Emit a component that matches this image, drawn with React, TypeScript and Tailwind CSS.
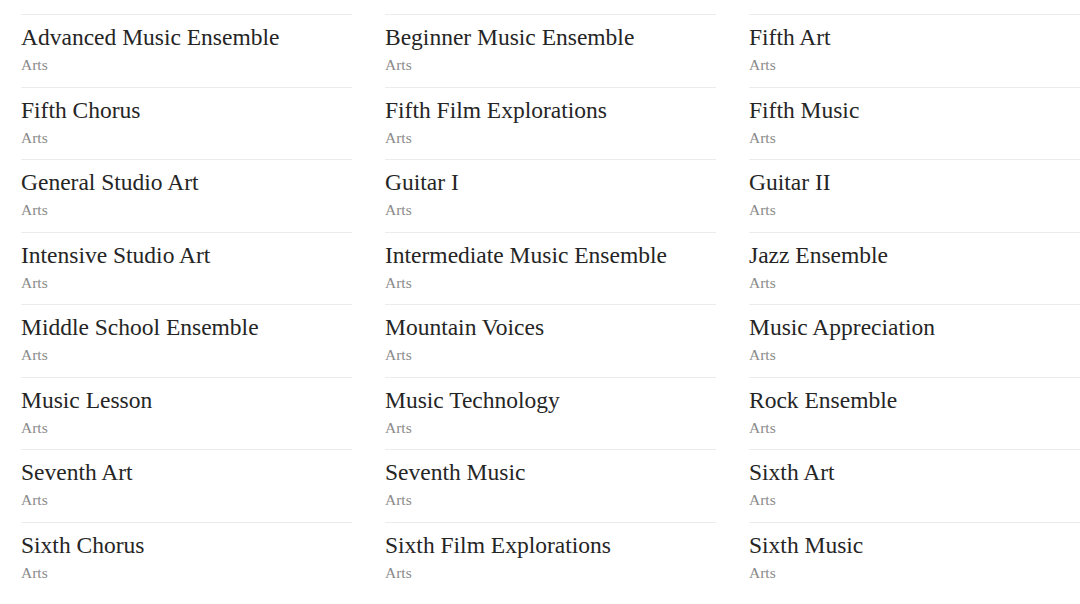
import React from "react";

const cols: string[][] = [
  ["Advanced Music Ensemble", "Fifth Chorus", "General Studio Art", "Intensive Studio Art", "Middle School Ensemble", "Music Lesson", "Seventh Art", "Sixth Chorus"],
  ["Beginner Music Ensemble", "Fifth Film Explorations", "Guitar I", "Intermediate Music Ensemble", "Mountain Voices", "Music Technology", "Seventh Music", "Sixth Film Explorations"],
  ["Fifth Art", "Fifth Music", "Guitar II", "Jazz Ensemble", "Music Appreciation", "Rock Ensemble", "Sixth Art", "Sixth Music"],
];

export default function App() {
  return (
    <div className="w-[1080px] h-[604px] overflow-hidden bg-white pl-[21px] pt-[14px]" style={{ fontFamily: '"Liberation Serif", serif' }}>
      <div className="grid grid-cols-3 gap-x-[33px]">
        {cols.map((col, ci) => (
          <ul key={ci} className="flex flex-col">
            {col.map((t) => (
              <li key={t} className="border-t border-[#ececec] h-[72.5px] pt-[8px]">
                <div className="text-[23.5px] leading-[28px] text-[#252525]">{t}</div>
                <div className="text-[15.5px] leading-[27px] text-[#8a8a8a]">Arts</div>
              </li>
            ))}
          </ul>
        ))}
      </div>
    </div>
  );
}
